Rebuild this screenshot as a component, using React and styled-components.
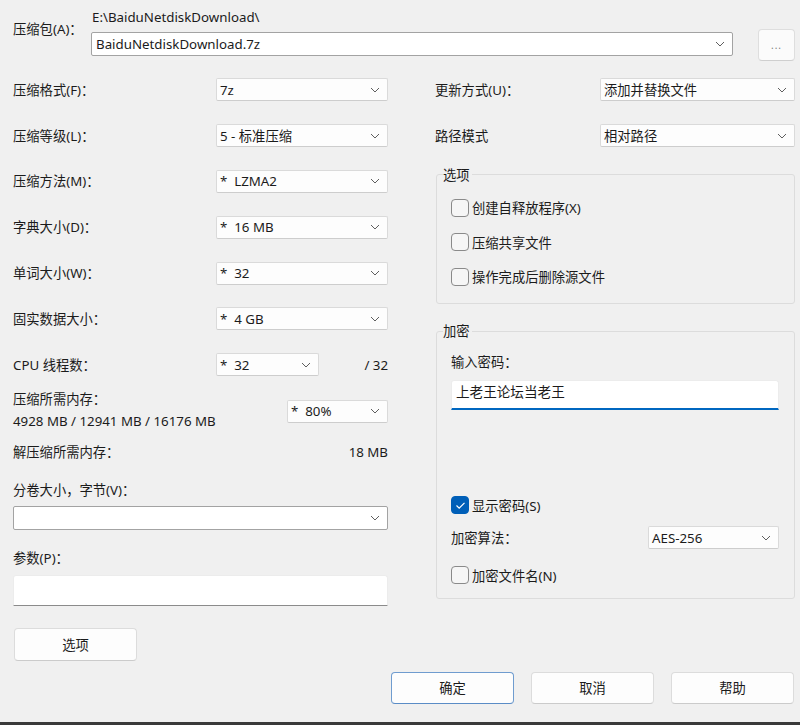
import React from 'react';
import styled, { createGlobalStyle } from 'styled-components';

const Global = createGlobalStyle`
  html, body {
    margin: 0;
    padding: 0;
    background: #f0f0f0;
  }
  * { box-sizing: border-box; }
`

const Page = styled.div`
  width: 800px;
  height: 725px;
  background: #f0f0f0;
  border-bottom: 3px solid #3a3a3a;
  padding: 8px 5px 0 13px;
  display: flex;
  flex-direction: column;
  font-family: "Segoe UI", "Noto Sans", "Noto Sans CJK SC", sans-serif;
  font-size: 13.3px;
  color: #1b1b1b;
`

const TopRow = styled.div`
  display: flex;
  align-items: flex-start;
`

const PackLabel = styled.div`
  width: 78px;
  padding-top: 12px;
  line-height: 18px;
`

const PathCol = styled.div`
  flex: 1;
  display: flex;
  flex-direction: column;
`

const PathText = styled.div`
  line-height: 18px;
  padding-left: 1px;
`

const Combo = styled.div`
  height: 24px;
  margin-top: ${p => p.$top || 0}px;
  background: #fff;
  border: 1px solid #a3a3a3;
  border-radius: 2px;
  display: flex;
  align-items: center;
  justify-content: space-between;
  padding: 0 7px 0 4px;
`

const BrowseButton = styled.div`
  width: 37px;
  height: 32px;
  margin: 21px 0 0 25px;
  background: #fbfbfb;
  border: 1px solid #dedede;
  border-bottom-color: #cfcfcf;
  border-radius: 4px;
  display: flex;
  align-items: center;
  justify-content: center;
  font-size: 10px;
  color: #808080;
  letter-spacing: 1px;
`

const Body = styled.div`
  margin-top: 6px;
  display: grid;
  grid-template-columns: 375px 360px;
  column-gap: 47px;
  align-items: start;
`

const Column = styled.div`
  display: flex;
  flex-direction: column;
`

const FieldGrid = styled.div`
  display: grid;
  grid-auto-rows: 45.8px;
`

const FieldRow = styled.div`
  display: grid;
  grid-template-columns: ${p => p.$label}px 1fr;
  align-items: center;
`

const Label = styled.div`
  line-height: 22px;
  white-space: nowrap;
`

const SelectBox = styled.div`
  width: ${p => p.$w}px;
  height: 23px;
  margin-top: ${p => p.$top || 0}px;
  background: #fdfdfd;
  border: 1px solid #dadada;
  border-bottom-color: #cdcdcd;
  border-radius: 2px;
  display: flex;
  align-items: center;
  justify-content: space-between;
  padding: 0 7px 0 3px;
  white-space: pre;
`

const Inline = styled.div`
  display: flex;
  align-items: center;
  justify-content: space-between;
  margin-top: ${p => p.$top || 0}px;
`

const MemBlock = styled.div`
  display: flex;
  justify-content: space-between;
  align-items: flex-start;
  height: 44px;
`

const LineText = styled.div`
  line-height: 22px;
  margin-top: ${p => p.$top || 0}px;
  white-space: nowrap;
`

const TextInput = styled.div`
  height: ${p => p.$h || 30}px;
  margin-top: ${p => p.$top || 0}px;
  background: #fff;
  border: 1px solid #ececec;
  border-bottom: ${p => p.$focus ? '2px solid #0067c0' : '1px solid #8b8b8b'};
  border-radius: 3px 3px 0 0;
  display: flex;
  align-items: center;
  padding: 0 4px 7px;
  font-size: 13.6px;
`

const Button = styled.div`
  width: 123px;
  height: ${p => p.$h || 32}px;
  margin-top: ${p => p.$top || 0}px;
  margin-left: ${p => p.$left || 0}px;
  background: #fdfdfd;
  border: 1px solid ${p => p.$primary ? '#6f9ccf' : '#dcdcdc'};
  border-bottom-color: ${p => p.$primary ? '#5a8cc6' : '#cbcbcb'};
  border-radius: 4px;
  display: flex;
  align-items: center;
  justify-content: center;
`

const Group = styled.fieldset`
  margin: ${p => p.$top}px 0 0 1px;
  padding: ${p => p.$pad};
  border: 1px solid #dcdcdc;
  border-radius: 3px;
  min-width: 0;
  display: flex;
  flex-direction: column;
`

const Legend = styled.legend`
  margin-left: -8px;
  padding: 0 2px 0 0;
  line-height: 18px;
`

const CheckRow = styled.div`
  display: flex;
  align-items: center;
  gap: 3px;
  height: ${p => p.$h || 18}px;
  margin-top: ${p => p.$top || 0}px;
`

const Box = styled.div`
  width: 18px;
  height: 18px;
  border-radius: 4px;
  border: 1px solid ${p => p.$on ? '#005fb8' : '#8a8a8a'};
  background: ${p => p.$on ? '#005fb8' : '#f6f6f6'};
  display: flex;
  align-items: center;
  justify-content: center;
`

const Footer = styled.div`
  margin-top: 11px;
  padding-right: 1px;
  display: flex;
  justify-content: flex-end;
  gap: 17px;
`

const Chevron = () => (
  <svg width="10" height="6" viewBox="0 0 10 6">
    <path d="M1 1 L5 5 L9 1" fill="none" stroke="#5f5f5f" strokeWidth="1" />
  </svg>
)

const Select = ({ w, value, top }) => (
  <SelectBox $w={w} $top={top}>
    <span>{value}</span>
    <Chevron />
  </SelectBox>
)

const Check = ({ on, label, top, h }) => (
  <CheckRow $top={top} $h={h}>
    <Box $on={on}>
      {on && (
        <svg width="11" height="9" viewBox="0 0 11 9">
          <path d="M1.5 4.5 L4.2 7.2 L9.5 1.8" fill="none" stroke="#fff" strokeWidth="1.2" />
        </svg>
      )}
    </Box>
    <span>{label}</span>
  </CheckRow>
)

const leftRows = [
  ['压缩格式(F)：', '7z'],
  ['压缩等级(L)：', '5 - 标准压缩'],
  ['压缩方法(M)：', '*  LZMA2'],
  ['字典大小(D)：', '*  16 MB'],
  ['单词大小(W)：', '*  32'],
  ['固实数据大小：', '*  4 GB'],
]

export default function App() {
  return (
    <Page>
      <Global />
      <TopRow>
        <PackLabel>压缩包(A)：</PackLabel>
        <PathCol>
          <PathText>E:\BaiduNetdiskDownload\</PathText>
          <Combo $top={6}>
            <span>BaiduNetdiskDownload.7z</span>
            <Chevron />
          </Combo>
        </PathCol>
        <BrowseButton>...</BrowseButton>
      </TopRow>

      <Body>
        <Column>
          <FieldGrid>
            {leftRows.map(([label, value]) => (
              <FieldRow key={label} $label={203}>
                <Label>{label}</Label>
                <Select w={172} value={value} />
              </FieldRow>
            ))}
            <FieldRow $label={203}>
              <Label>CPU 线程数：</Label>
              <Inline>
                <Select w={103} value="*  32" />
                <span>/ 32</span>
              </Inline>
            </FieldRow>
          </FieldGrid>

          <MemBlock>
            <div>
              <LineText>压缩所需内存：</LineText>
              <LineText>4928 MB / 12941 MB / 16176 MB</LineText>
            </div>
            <Select w={101} value="*  80%" top={12} />
          </MemBlock>

          <Inline>
            <LineText $top={9}>解压缩所需内存：</LineText>
            <LineText $top={9}>18 MB</LineText>
          </Inline>

          <LineText $top={16}>分卷大小，字节(V)：</LineText>
          <Combo $top={5}>
            <span></span>
            <Chevron />
          </Combo>

          <LineText $top={17}>参数(P)：</LineText>
          <TextInput $top={6} $h={31} />

          <Button $h={33} $top={22} $left={1}>选项</Button>
        </Column>

        <Column>
          <FieldGrid>
            <FieldRow $label={165}>
              <Label>更新方式(U)：</Label>
              <Select w={195} value="添加并替换文件" />
            </FieldRow>
            <FieldRow $label={165}>
              <Label>路径模式</Label>
              <Select w={195} value="相对路径" />
            </FieldRow>
          </FieldGrid>

          <Group $top={7} $pad="7px 0 9px 14px">
            <Legend>选项</Legend>
            <Check label="创建自释放程序(X)" h={34.5} />
            <Check label="压缩共享文件" h={34.5} />
            <Check label="操作完成后删除源文件" h={34.5} />
          </Group>

          <Group $top={18} $pad="0 15px 14px 14px">
            <Legend>加密</Legend>
            <LineText $top={11}>输入密码：</LineText>
            <TextInput $top={7} $focus>上老王论坛当老王</TextInput>
            <Check on label="显示密码(S)" top={86} />
            <Inline $top={12}>
              <Label>加密算法：</Label>
              <Select w={131} value="AES-256" />
            </Inline>
            <Check label="加密文件名(N)" top={17} />
          </Group>
        </Column>
      </Body>

      <Footer>
        <Button $primary>确定</Button>
        <Button>取消</Button>
        <Button>帮助</Button>
      </Footer>
    </Page>
  )
}
